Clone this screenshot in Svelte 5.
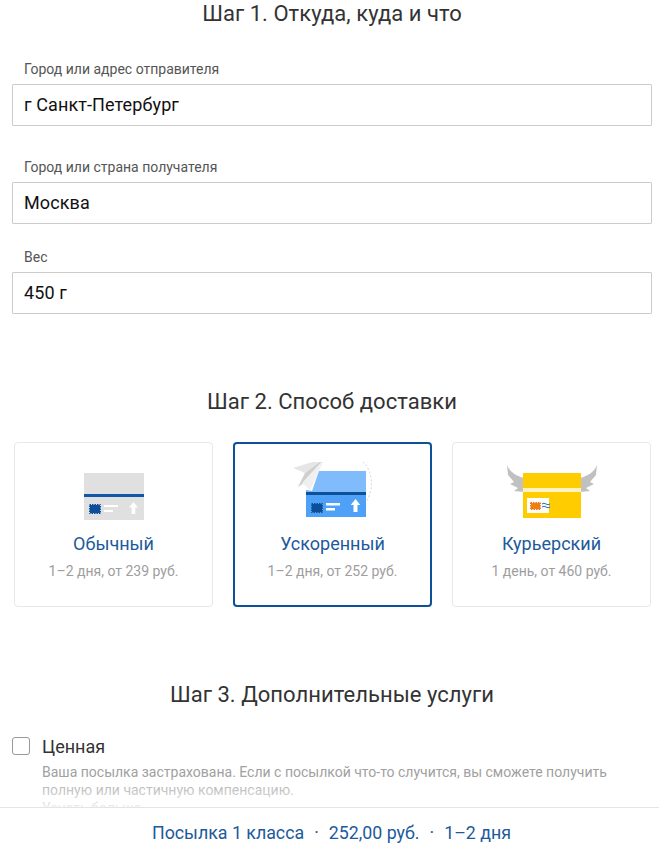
<script>
  const fields = [
    { label: 'Город или адрес отправителя', value: 'г Санкт-Петербург', cls: 'from' },
    { label: 'Город или страна получателя', value: 'Москва', cls: 'to' },
    { label: 'Вес', value: '450 г', cls: 'weight' }
  ];

  // viewBox uses page coordinates of each icon, easier to compare with the screenshot
  const methods = [
    { id: 'plain', title: 'Обычный', note: '1–2 дня, от 239 руб.', box: '58 462 111 70' },
    { id: 'fast', title: 'Ускоренный', note: '1–2 дня, от 252 руб.', box: '277 462 111 70' },
    { id: 'courier', title: 'Курьерский', note: '1 день, от 460 руб.', box: '496 462 111 70' }
  ];

  let selected = 'fast';
</script>

<div class="page">
  <h2>Шаг 1. Откуда, куда и что</h2>

  {#each fields as field}
    <label class="field {field.cls}">
      <span class="label">{field.label}</span>
      <input type="text" value={field.value} />
    </label>
  {/each}

  <h2 class="step-two">Шаг 2. Способ доставки</h2>

  <div class="cards">
    {#each methods as m}
      <button class="card" class:active={selected === m.id} on:click={() => (selected = m.id)}>
        <svg class="icon" width="111" height="70" viewBox={m.box}>
          {#if m.id === 'plain'}
            <rect x="84" y="473" width="60" height="47" fill="#e0e0e0" />
            <rect x="84" y="494" width="60" height="3" fill="#0f57a8" />
            <rect x="90" y="505" width="10" height="8" fill="#0f4f9a" />
            <rect x="89.500" y="504.500" width="11" height="9" fill="none" stroke="#0f4f9a" stroke-dasharray="1.500 1" />
            <path d="M104 505h14v2h-14zM104 510h9v2h-9z" fill="#fff" />
            <path d="M133.500 502l4.500 5.500h-2.700v6.500h-3.600v-6.500h-2.700z" fill="#fff" />
          {:else if m.id === 'fast'}
            <path d="M325 458C335 452 355 453 364 463C373 472 374 490 366 502" fill="none" stroke="#d6d6d6" stroke-dasharray="2 2" />
            <rect x="306" y="471" width="60" height="21" fill="#80bbfb" />
            <rect x="306" y="492" width="60" height="3" fill="#0d5199" />
            <rect x="306" y="495" width="60" height="22" fill="#4ea1f6" />
            <rect x="312" y="504" width="10" height="8" fill="#0d4f96" />
            <rect x="311.500" y="503.500" width="11" height="9" fill="none" stroke="#0d4f96" stroke-dasharray="1.500 1" />
            <path d="M326 503h14v2.500h-14zM326 508h9v2.500h-9z" fill="#fff" />
            <path d="M355.500 499l4.800 6h-2.800v7h-4v-7h-2.800z" fill="#fff" />
            <path d="M303 468H320L312 491L297 488z" fill="#fff" />
            <path d="M325 458L293 468L305 473z" fill="#e6e6e6" />
            <path d="M325 458L305 473L298 487L307 481z" fill="#cfcfcf" />
            <path d="M325 458L302 483L310 490z" fill="#f0f0f0" />
          {:else}
            <g fill="#c0c0c0">
              <path d="M507 465C510 472 516 476 524 478V492L514 491L518 488L510 484L514 482L508 475z" />
              <path d="M597 465C594 472 588 476 580 478V492L590 491L586 488L594 484L590 482L596 475z" />
            </g>
            <rect x="523" y="473" width="58" height="45" fill="#ffcc00" />
            <rect x="523" y="488" width="58" height="4" fill="#fff3c4" />
            <rect x="527" y="498" width="22" height="15" fill="#fff" />
            <rect x="531" y="503" width="9" height="6" fill="#ef7d10" />
            <rect x="530.500" y="502.500" width="10" height="7" fill="none" stroke="#ef7d10" stroke-dasharray="1.500 1" />
            <path d="M542 504q2-1.600 4 0t4 0M542 507q2-1.600 4 0t4 0" fill="none" stroke="#1f6fb5" />
          {/if}
        </svg>
        <span class="title">{m.title}</span>
        <span class="note">{m.note}</span>
      </button>
    {/each}
  </div>

  <h2 class="step-three">Шаг 3. Дополнительные услуги</h2>

  <div class="service">
    <span class="box"></span>
    <div class="service-body">
      <div class="service-name">Ценная</div>
      <p>Ваша посылка застрахована. Если с посылкой что-то случится, вы сможете получить полную или частичную компенсацию.</p>
      <p>Узнать больше</p>
    </div>
  </div>

  <div class="fade"></div>
  <div class="summary">
    <span>Посылка 1 класса</span>
    <span>·</span>
    <span>252,00 руб.</span>
    <span>·</span>
    <span>1–2 дня</span>
  </div>
</div>

<style>
  :global(body) {
    background: #fff;
  }

  .page {
    position: relative;
    box-sizing: border-box;
    height: 854px;
    overflow: hidden;
    padding: 0 7px 0 12px;
    font-family: Roboto, sans-serif;
    color: #212121;
    background: #fff;
  }

  h2 {
    margin: 0;
    font-size: 22px;
    line-height: 28px;
    font-weight: 400;
    letter-spacing: 0.04px;
    text-align: center;
    color: #333;
  }

  .step-two {
    margin-top: 74px;
  }

  .step-three {
    margin-top: 74px;
  }

  .field {
    display: block;
  }

  .from {
    margin-top: 26px;
  }

  .to {
    margin-top: 26px;
  }

  .weight {
    margin-top: 18px;
  }

  .label {
    display: block;
    padding-left: 12px;
    font-size: 14px;
    line-height: 30px;
    color: #555;
  }

  input {
    display: block;
    box-sizing: border-box;
    width: 100%;
    height: 42px;
    margin: 0;
    padding: 0 11px 2px;
    border: 1px solid #ccc;
    border-radius: 1px;
    font-family: Roboto, sans-serif;
    font-size: 18px;
    letter-spacing: 0.1px;
    color: #111;
    background: #fff;
    outline: none;
  }

  .cards {
    display: grid;
    grid-template-columns: repeat(3, 199px);
    gap: 20px;
    margin: 26px 0 0 2px;
  }

  .card {
    display: flex;
    flex-direction: column;
    align-items: center;
    box-sizing: border-box;
    height: 165px;
    padding: 19px 0 0;
    border: 1px solid #e8e8e8;
    border-radius: 4px;
    background: #fff;
    font-family: Roboto, sans-serif;
    cursor: pointer;
  }

  .card.active {
    border: 2px solid #0d5199;
    padding-top: 18px;
  }

  .icon {
    display: block;
  }

  .title {
    margin-top: 1px;
    font-size: 18px;
    line-height: 22px;
    color: #1c5a9c;
  }

  .note {
    margin-top: 7px;
    font-size: 14px;
    line-height: 18px;
    color: #9e9e9e;
  }

  .service {
    display: flex;
    gap: 12px;
    margin-top: 28px;
  }

  .box {
    flex: none;
    box-sizing: border-box;
    width: 18px;
    height: 18px;
    border: 1px solid #999;
    border-radius: 3px;
  }

  .service-body {
    max-width: 590px;
  }

  .service-name {
    font-size: 18px;
    line-height: 20px;
    color: #333;
  }

  .service-body p {
    margin: 0;
    font-size: 14px;
    line-height: 18px;
    color: #a0a0a0;
  }

  .service-name + p {
    margin-top: 6px;
  }

  .fade {
    position: absolute;
    left: 0;
    right: 0;
    bottom: 47px;
    height: 32px;
    background: linear-gradient(rgba(255, 255, 255, 0), rgba(255, 255, 255, 0.8));
  }

  .summary {
    position: absolute;
    box-sizing: border-box;
    left: 0;
    right: 0;
    bottom: 0;
    display: flex;
    justify-content: center;
    gap: 10px;
    height: 47px;
    padding-left: 4px;
    line-height: 50px;
    border-top: 1px solid #e4e4e4;
    font-size: 17.800px;
    color: #1c5a9c;
    background: #fff;
  }
</style>
